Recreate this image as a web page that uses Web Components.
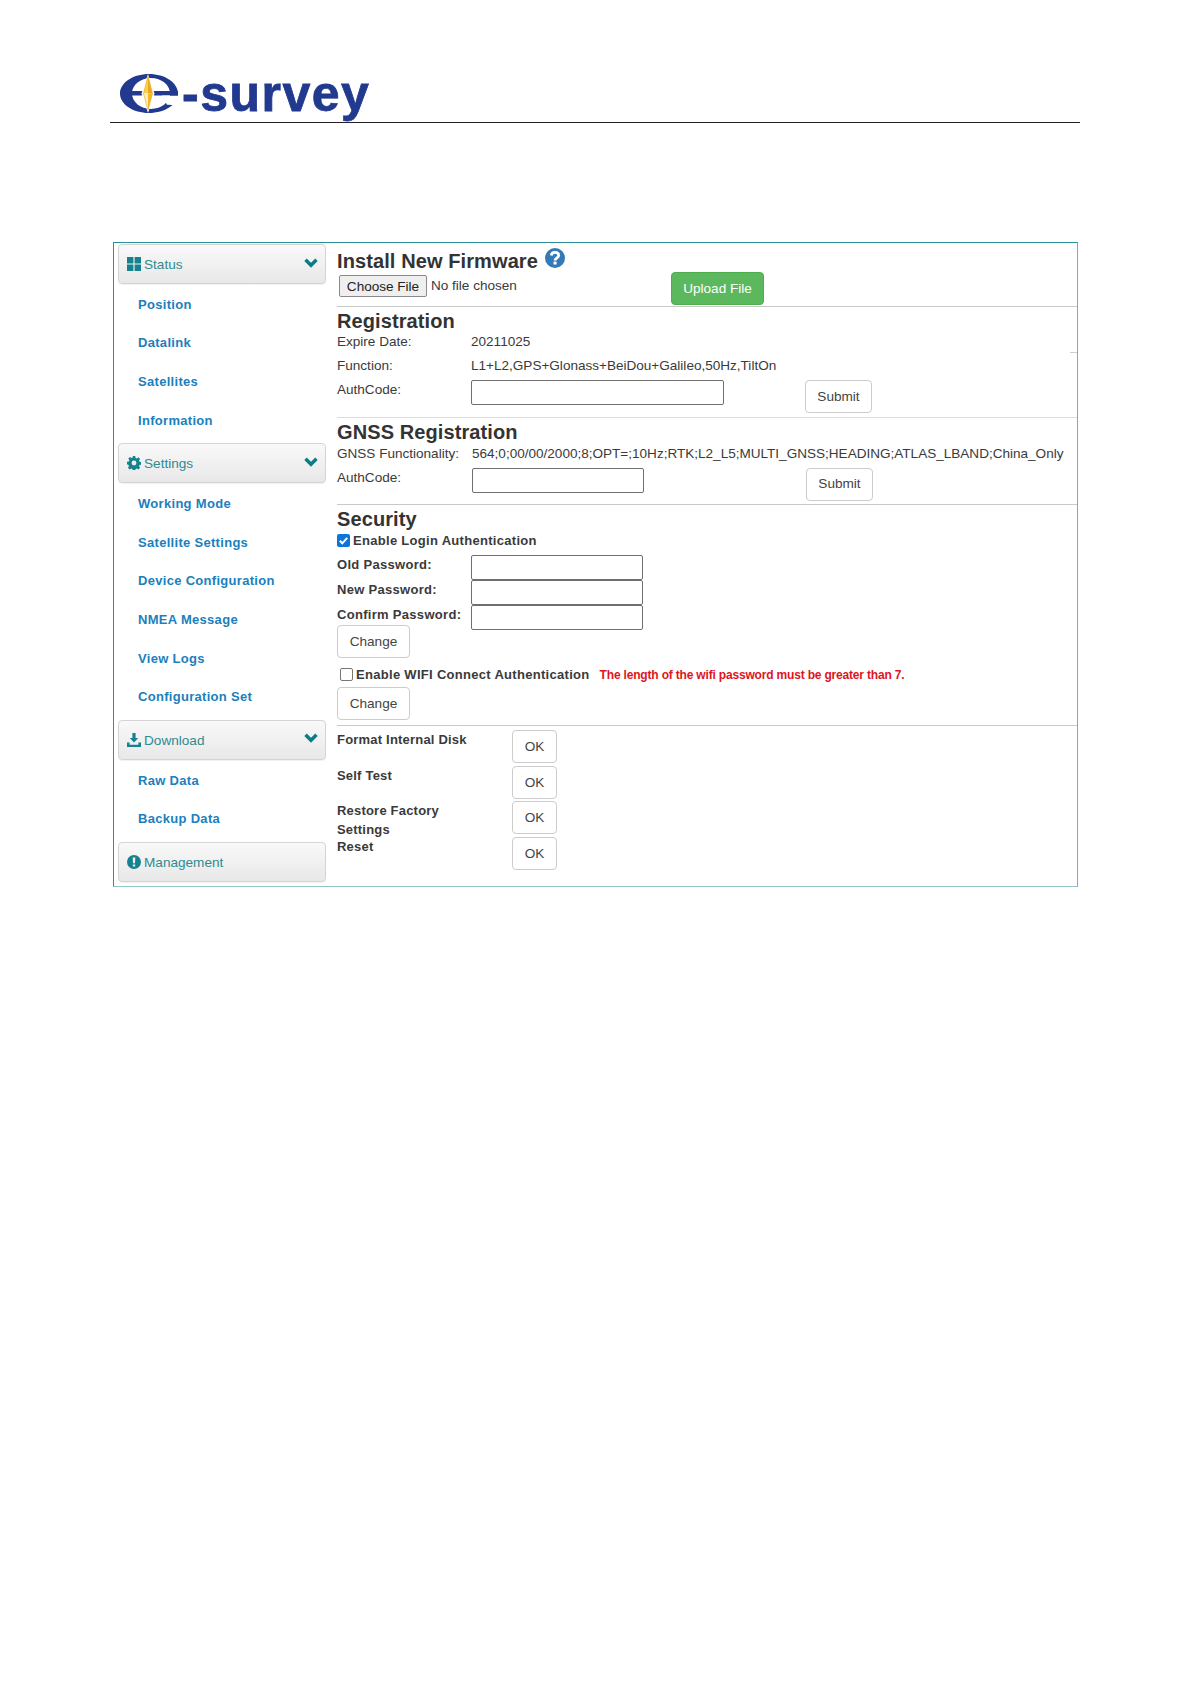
<!DOCTYPE html>
<html>
<head>
<meta charset="utf-8">
<style>
    html, body { margin: 0; background: #fff; }
    body { font-family: "Liberation Sans", Arial, sans-serif; color: #3a3a3a; width: 1190px; height: 1684px; overflow: hidden; }
</style>
</head>
<body>
<page-head></page-head>
<app-frame>
    <side-nav slot="nav">
        <nav-head icon="grid" open>Status</nav-head>
        <nav-link>Position</nav-link>
        <nav-link>Datalink</nav-link>
        <nav-link>Satellites</nav-link>
        <nav-link>Information</nav-link>
        <nav-head icon="gear" open>Settings</nav-head>
        <nav-link>Working Mode</nav-link>
        <nav-link>Satellite Settings</nav-link>
        <nav-link>Device Configuration</nav-link>
        <nav-link>NMEA Message</nav-link>
        <nav-link>View Logs</nav-link>
        <nav-link>Configuration Set</nav-link>
        <nav-head icon="download" open>Download</nav-head>
        <nav-link>Raw Data</nav-link>
        <nav-link>Backup Data</nav-link>
        <nav-head icon="alert">Management</nav-head>
    </side-nav>
    <firmware-panel slot="main"></firmware-panel>
    <registration-panel slot="main"></registration-panel>
    <gnss-panel slot="main"></gnss-panel>
    <security-panel slot="main"></security-panel>
    <actions-panel slot="main"></actions-panel>
</app-frame>

<script>
// small helper so each element does not repeat the shadow boilerplate
function shadow(el, html) {
    el.attachShadow({ mode: 'open' }).innerHTML = html;
}

const ICONS = {
    grid: '<svg width="14" height="14" viewBox="0 0 14 14"><path fill="#14838f" d="M0 0h6.4v6.4H0zM7.6 0H14v6.4H7.6zM0 7.6h6.4V14H0zM7.6 7.6H14V14H7.6z"/></svg>',
    gear: '<svg width="14" height="14" viewBox="0 0 14 14"><path fill="#14838f" fill-rule="evenodd" d="M5.8 0h2.4l.4 1.9 1.2.5 1.6-1.1 1.7 1.7-1.1 1.6.5 1.2 1.9.4v2.4l-1.9.4-.5 1.2 1.1 1.6-1.7 1.7-1.6-1.1-1.2.5-.4 1.9H5.8l-.4-1.9-1.2-.5-1.6 1.1-1.7-1.7 1.1-1.6-.5-1.2L0 8.2V5.8l1.9-.4.5-1.2-1.100-1.600 1.700-1.700 1.600 1.100 1.200-.5zM7 4.600a2.400 2.400 0 1 0 0 4.800 2.400 2.400 0 0 0 0-4.800z"/></svg>',
    download: '<svg width="14" height="14" viewBox="0 0 14 14"><path fill="#14838f" d="M5.4 0h3.2v5h2.6L7 9.4 2.8 5h2.6zM0 9.600h2.600v2.200h8.800V9.600H14V14H0z"/></svg>',
    alert: '<svg width="14" height="14" viewBox="0 0 14 14"><path fill="#14838f" fill-rule="evenodd" d="M7 0a7 7 0 1 1 0 14A7 7 0 0 1 7 0zM5.700 2.600l.3 5.600h2l.3-5.600zM5.800 9.400v2.100h2.400V9.400z"/></svg>'
};

class PageHead extends HTMLElement {
    constructor() {
        super();
        shadow(this, `
            <style>
                :host { display: block; width: 970px; margin-left: 110px; padding-top: 72px; height: 50px; border-bottom: 1px solid #222; }
                .logo { display: flex; align-items: flex-start; padding-left: 10px; height: 50px; }
                svg { flex: none; margin-top: 2px; }
                span { font: bold 50px/46px "Liberation Sans", sans-serif; color: #213a8f; -webkit-text-stroke: .8px #213a8f; letter-spacing: 1.5px; margin-left: 4px; margin-top: -1px; white-space: nowrap; }
            </style>
            <div class="logo">
                <svg width="58" height="39" viewBox="0 0 58 38" preserveAspectRatio="none">
                    <path fill="#213a8f" fill-rule="evenodd" d="M29 0C45 0 58 8.500 58 19S45 38 29 38 0 29.500 0 19 13 0 29 0zM31 4C20.500 4 12 10.700 12 19s8.500 15 19 15 19-6.700 19-15S41.500 4 31 4z"/>
                    <path fill="#213a8f" d="M8 16.500h42v4.500H8z"/>
                    <path fill="#fff" d="M42 21h17v9.500L47 30z"/>
                    <path fill="#213a8f" d="M50 16.500h8v4.500h-8z"/>
                    <path fill="#fff" d="M21.500 19 28 0l6.500 19L28 38z"/>
                    <path fill="#fbd24a" d="M28 2v17h-4.500z"/>
                    <path fill="#f0a818" d="M28 2v17h4.500z"/>
                    <path fill="#fdf0c0" d="M23.500 19H28v16z"/>
                    <path fill="#f5b72a" d="M32.500 19H28v16z"/>
                    <path fill="none" stroke="#e9ad2e" stroke-width=".7" d="M28 2l4.500 17L28 35l-4.500-16z"/>
                </svg>
                <span>-survey</span>
            </div>`);
    }
}

class AppFrame extends HTMLElement {
    constructor() {
        super();
        shadow(this, `
            <style>
                :host { display: flex; box-sizing: border-box; width: 965px; height: 645px; margin: 119px 0 0 113px; border: 1px solid #2b8f9c; border-bottom-color: #8fc4c9; border-right-color: #6fb3ba; }
                .nav { flex: none; width: 223px; }
                .main { flex: 1; min-width: 0; }
            </style>
            <div class="nav"><slot name="nav"></slot></div>
            <div class="main"><slot name="main"></slot></div>`);
    }
}

class SideNav extends HTMLElement {
    constructor() {
        super();
        shadow(this, `
            <style>:host { display: block; padding: 1px 0 0 4px; }</style>
            <slot></slot>`);
    }
}

class NavHead extends HTMLElement {
    constructor() {
        super();
        const icon = ICONS[this.getAttribute('icon')] || '';
        const chev = this.hasAttribute('open')
            ? '<svg class="chev" width="14" height="10" viewBox="0 0 14 10"><path fill="none" stroke="#0b7c86" stroke-width="3.400" d="M1.500 1.800 7 7.300l5.500-5.500"/></svg>'
            : '';
        shadow(this, `
            <style>
                :host { display: flex; align-items: center; box-sizing: border-box; width: 208px; height: 40px; padding: 0 7px 0 8px; border: 1px solid #d4d4d4; border-radius: 4px; background: linear-gradient(#f9f9f9, #e8e8e8); box-shadow: 0 1px 1px rgba(0,0,0,.06); color: #2f8b90; font-size: 13.6px; }
                :host(:not(:first-child)) { margin-top: 5px; }
                .icon { display: flex; margin-right: 3px; }
                .label { flex: 1; margin-top: 1px; }
                .chev { margin-top: -3px; }
            </style>
            <span class="icon">${icon}</span>
            <span class="label"><slot></slot></span>
            ${chev}`);
    }
}

class NavLink extends HTMLElement {
    constructor() {
        super();
        shadow(this, `
            <style>
                :host { display: flex; align-items: center; box-sizing: border-box; height: 38.6px; padding: 2px 0 0 20px; color: #1b80bd; font-size: 13px; font-weight: bold; letter-spacing: .3px; }
            </style>
            <slot></slot>`);
    }
}

class PanelTitle extends HTMLElement {
    constructor() {
        super();
        shadow(this, `
            <style>
                :host { display: block; font-size: 20px; line-height: 24px; font-weight: bold; color: #333; letter-spacing: .1px; }
            </style>
            <slot></slot>`);
    }
}

class PlainButton extends HTMLElement {
    constructor() {
        super();
        shadow(this, `
            <style>
                :host { display: inline-flex; align-items: center; justify-content: center; box-sizing: border-box; height: 33px; border: 1px solid #ccc; border-radius: 4px; background: #fff; color: #444; font-size: 13.6px; font-weight: normal; }
            </style>
            <slot></slot>`);
    }
}

class TextBox extends HTMLElement {
    constructor() {
        super();
        shadow(this, `
            <style>
                :host { display: block; box-sizing: border-box; height: 25px; border: 1px solid #6f6f6f; border-radius: 2px; background: #fff; }
            </style>`);
    }
}

class FirmwarePanel extends HTMLElement {
    constructor() {
        super();
        shadow(this, `
            <style>
                :host { display: block; box-sizing: border-box; height: 64px; border-bottom: 1px solid #c9c9c9; padding-top: 6px; }
                .title { display: flex; align-items: flex-start; gap: 7px; height: 24px; }
                svg { margin-top: -1px; }
                .row { display: flex; align-items: flex-start; margin-top: -1px; padding-left: 2px; font-size: 13.55px; }
                .file { box-sizing: border-box; width: 88px; height: 22px; margin-top: 3px; display: flex; align-items: center; justify-content: center; border: 1px solid #8a8a8a; border-radius: 2px; background: #efefef; color: #222; }
                .none { width: 240px; margin: 3px 0 0 4px; line-height: 22px; }
                .upload { box-sizing: border-box; width: 93px; height: 33px; display: flex; align-items: center; justify-content: center; border: 1px solid #4cae4c; border-radius: 4px; background: #5cb85c; color: #fff; }
            </style>
            <div class="title">
                <panel-title>Install New Firmware</panel-title>
                <svg width="20" height="20" viewBox="0 0 20 20"><circle cx="10" cy="10" r="10" fill="#337ab7"/><path fill="none" stroke="#fff" stroke-width="2.800" d="M6.300 7.500C6.500 5.400 8 4.300 10 4.300c2.200 0 3.700 1.300 3.700 3.100 0 2.400-3.600 2.500-3.600 5.100"/><rect x="8.500" y="13.600" width="3.100" height="2.900" fill="#fff"/></svg>
            </div>
            <div class="row">
                <span class="file">Choose File</span>
                <span class="none">No file chosen</span>
                <span class="upload">Upload File</span>
            </div>`);
    }
}

class RegistrationPanel extends HTMLElement {
    constructor() {
        super();
        shadow(this, `
            <style>
                :host { display: block; position: relative; box-sizing: border-box; height: 111px; border-bottom: 1px solid #dcdcdc; padding-top: 2px; font-size: 13.55px; }
                .grid { display: grid; grid-template-columns: 134px 1fr; grid-auto-rows: 24px; margin-top: -3px; }
                .grid div { line-height: 24px; }
                .auth { display: flex; align-items: flex-start; }
                text-box { width: 253px; margin-top: 2px; }
                plain-button { width: 67px; margin: 2px 0 0 81px; }
                .stub { position: absolute; right: 0; top: 45px; width: 7px; height: 1px; background: #cfcfcf; }
            </style>
            <panel-title>Registration</panel-title>
            <div class="grid">
                <div>Expire Date:</div><div>20211025</div>
                <div>Function:</div><div>L1+L2,GPS+Glonass+BeiDou+Galileo,50Hz,TiltOn</div>
                <div>AuthCode:</div>
                <div class="auth"><text-box></text-box><plain-button>Submit</plain-button></div>
            </div>
            <div class="stub"></div>`);
    }
}

class GnssPanel extends HTMLElement {
    constructor() {
        super();
        shadow(this, `
            <style>
                :host { display: block; box-sizing: border-box; height: 87px; border-bottom: 1px solid #c9c9c9; padding-top: 2px; font-size: 13.55px; }
                .grid { display: grid; grid-template-columns: 135px 1fr; grid-auto-rows: 23.5px; margin-top: -2px; }
                .grid div { line-height: 24px; white-space: nowrap; }
                .auth { display: flex; align-items: flex-start; }
                text-box { width: 172px; margin-top: 2px; }
                plain-button { width: 67px; margin: 2px 0 0 162px; }
            </style>
            <panel-title>GNSS Registration</panel-title>
            <div class="grid">
                <div>GNSS Functionality:</div><div>564;0;00/00/2000;8;OPT=;10Hz;RTK;L2_L5;MULTI_GNSS;HEADING;ATLAS_LBAND;China_Only</div>
                <div>AuthCode:</div>
                <div class="auth"><text-box></text-box><plain-button>Submit</plain-button></div>
            </div>`);
    }
}

class SecurityPanel extends HTMLElement {
    constructor() {
        super();
        shadow(this, `
            <style>
                :host { display: block; box-sizing: border-box; height: 221px; border-bottom: 1px solid #c9c9c9; padding-top: 2px; font-size: 13px; }
                b { font-weight: bold; letter-spacing: .3px; }
                .check { display: flex; align-items: center; gap: 3px; height: 22px; margin-top: -2px; }
                .box { box-sizing: border-box; width: 13px; height: 13px; border: 1px solid #767676; border-radius: 2px; background: #fff; }
                .box.on { border: 0; background: #0b75d8; display: flex; }
                .pw { display: grid; grid-template-columns: 134px 172px; grid-auto-rows: 25px; margin-top: 4px; }
                .pw b { line-height: 19px; white-space: nowrap; }
                .change { margin-top: -5px; }
                plain-button { width: 73px; }
                .wifi { margin: 5px 0 0 3px; }
                .hint { margin-left: 7px; color: #e0141c; font-size: 12px; font-weight: bold; letter-spacing: -.18px; margin-top: 2px; }
                .again { margin-top: 2px; }
            </style>
            <panel-title>Security</panel-title>
            <div class="check">
                <span class="box on"><svg width="13" height="13" viewBox="0 0 13 13"><path fill="none" stroke="#fff" stroke-width="2" d="M2.800 6.800 5.300 9.300 10.200 3.800"/></svg></span>
                <b>Enable Login Authentication</b>
            </div>
            <div class="pw">
                <b>Old Password:</b><text-box></text-box>
                <b>New Password:</b><text-box></text-box>
                <b>Confirm Password:</b><text-box></text-box>
            </div>
            <plain-button class="change">Change</plain-button>
            <div class="check wifi">
                <span class="box"></span>
                <b>Enable WIFI Connect Authentication</b>
                <span class="hint">The length of the wifi password must be greater than 7.</span>
            </div>
            <plain-button class="again">Change</plain-button>`);
    }
}

class ActionsPanel extends HTMLElement {
    constructor() {
        super();
        shadow(this, `
            <style>
                :host { display: grid; grid-template-columns: 175px 45px; grid-auto-rows: 35.5px; padding-top: 4px; font-size: 13px; }
                b { font-weight: bold; letter-spacing: .2px; line-height: 18px; display: block; padding-top: 1px; }
                b span { display: block; margin-top: 1px; }
                plain-button { width: 45px; }
            </style>
            <b>Format Internal Disk</b><plain-button>OK</plain-button>
            <b>Self Test</b><plain-button>OK</plain-button>
            <b>Restore Factory<span>Settings</span></b><plain-button>OK</plain-button>
            <b>Reset</b><plain-button>OK</plain-button>`);
    }
}

customElements.define('page-head', PageHead);
customElements.define('app-frame', AppFrame);
customElements.define('side-nav', SideNav);
customElements.define('nav-head', NavHead);
customElements.define('nav-link', NavLink);
customElements.define('panel-title', PanelTitle);
customElements.define('plain-button', PlainButton);
customElements.define('text-box', TextBox);
customElements.define('firmware-panel', FirmwarePanel);
customElements.define('registration-panel', RegistrationPanel);
customElements.define('gnss-panel', GnssPanel);
customElements.define('security-panel', SecurityPanel);
customElements.define('actions-panel', ActionsPanel);
</script>
</body>
</html>
